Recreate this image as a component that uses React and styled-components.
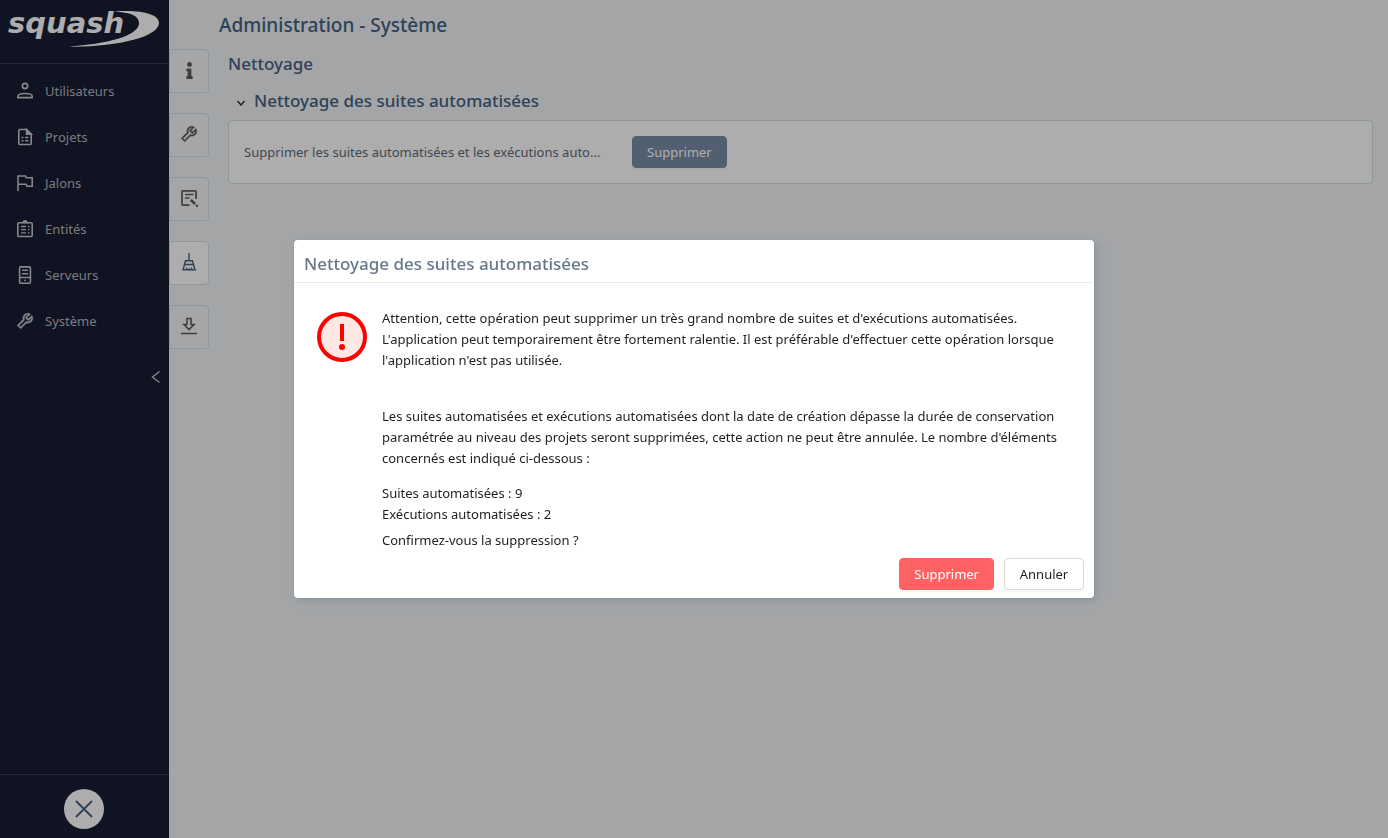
import React from "react";
import styled, { createGlobalStyle } from "styled-components";
import { AiOutlineTool } from "react-icons/ai";
import { FaInfo } from "react-icons/fa";

const GlobalStyle = createGlobalStyle`
  * {
    box-sizing: border-box;
  }

  body {
    margin: 0;
    font-family: "Noto Sans", "Open Sans", sans-serif;
    font-size: 13px;
    line-height: 21px;
    color: #1f1f1f;
  }

  h1,
  h2,
  h3,
  p {
    margin: 0;
  }
`;

const Layout = styled.div`
  display: flex;
  min-height: 100vh;
  background: #f1f4f7;
`;

const Sidebar = styled.aside`
  display: flex;
  flex-direction: column;
  flex: 0 0 169px;
  background: #191d33;
`;

const LogoLink = styled.a`
  display: block;
  height: 64px;
  border-bottom: 1px solid #31375a;

  svg {
    display: block;
  }
`;

const Menu = styled.nav`
  display: flex;
  flex-direction: column;
  padding-top: 4px;
`;

const MenuLink = styled.a`
  display: grid;
  grid-template-columns: 20px 1fr;
  align-items: center;
  justify-items: start;
  gap: 10px;
  height: 46px;
  padding-left: 15px;
  color: #b4b6bd;
  text-decoration: none;

  svg {
    justify-self: center;
    color: #c6c8ce;
  }
`;

const CollapseButton = styled.button`
  align-self: flex-end;
  display: flex;
  margin: 24px 4px 0 0;
  padding: 0;
  border: 0;
  background: none;
  color: #c5c6cc;
`;

const SidebarFooter = styled.div`
  display: flex;
  padding: 14px 64px 9px;
  margin-top: auto;
  border-top: 1px solid #31375a;
`;

const CloseButton = styled.button`
  display: flex;
  align-items: center;
  justify-content: center;
  width: 40px;
  height: 40px;
  padding: 0;
  border: 0;
  border-radius: 50%;
  background: #fff;
  color: #44607f;
`;

const Main = styled.main`
  flex: 1;
  min-width: 0;
`;

const PageTitle = styled.h1`
  padding: 11px 0 10px 50px;
  color: #44607f;
  font-size: 19px;
  font-weight: 500;
  line-height: 28px;
`;

const Body = styled.div`
  display: flex;
`;

const Tabs = styled.nav`
  display: flex;
  flex-direction: column;
  flex: 0 0 40px;
  gap: 20px;
`;

const TabLink = styled.a`
  display: flex;
  align-items: center;
  justify-content: center;
  height: 44px;
  padding-bottom: 2px;
  border: 1px solid #d5e1e6;
  border-radius: 0 4px 4px 0;
  background: ${({ $active }) => ($active ? "#fff" : "#f3f5f7")};
  color: ${({ $active }) => ($active ? "#44607f" : "#5c5c5c")};
`;

const Content = styled.div`
  flex: 1;
  min-width: 0;
  padding: 0 15px 0 19px;
`;

const SectionTitle = styled.h2`
  color: #44607f;
  font-size: 17px;
  font-weight: 500;
  line-height: 30px;
`;

const PanelTitle = styled.h3`
  display: flex;
  align-items: center;
  gap: 7px;
  padding: 7px 0 4px 7px;
  color: #44607f;
  font-size: 17px;
  font-weight: 500;
  line-height: 30px;
`;

const ToggleButton = styled.button`
  display: flex;
  padding: 4px 0 0;
  border: 0;
  background: none;
  color: #1f1f1f;
`;

const Panel = styled.section`
  display: flex;
  align-items: center;
  gap: 30px;
  padding: 15px;
  border: 1px solid #d0dfe5;
  border-radius: 4px;
  background: #fff;
`;

const PanelLabel = styled.span`
  flex: 0 1 358px;
  white-space: nowrap;
  color: #5f6c78;
`;

const buttonColors = {
  primary: { background: "#7a8da5", border: "#7a8da5", text: "#fff" },
  danger: { background: "#ff6262", border: "#ff6262", text: "#fff" },
  plain: { background: "#fff", border: "#d9d9d9", text: "#1f1f1f" },
};

const Button = styled.button`
  min-width: 80px;
  height: 32px;
  padding: 0 14px;
  border: 1px solid ${({ $kind }) => buttonColors[$kind].border};
  border-radius: 4px;
  background: ${({ $kind }) => buttonColors[$kind].background};
  box-shadow: 0 2px 0 rgba(0, 0, 0, 0.03);
  color: ${({ $kind }) => buttonColors[$kind].text};
  font: inherit;
`;

const Backdrop = styled.div`
  position: fixed;
  inset: 0;
  display: flex;
  align-items: center;
  justify-content: center;
  background: rgba(0, 0, 0, 0.32);
`;

const Dialog = styled.div`
  width: 800px;
  max-width: 90%;
  border-radius: 4px;
  background: #fff;
  box-shadow: 2px 2px 8px rgba(100, 125, 135, 0.5);
`;

const DialogTitle = styled.h2`
  padding: 9px 10px 3px;
  border-bottom: 1px solid #ebebeb;
  color: #66788a;
  font-size: 17px;
  font-weight: 500;
  line-height: 30px;
`;

const DialogBody = styled.div`
  display: flex;
  align-items: flex-start;
  gap: 15px;
  padding: 25px 23px 0;

  > svg {
    flex: none;
    margin-top: 4px;
  }
`;

const DialogText = styled.div`
  color: #1f1f1f;
`;

const Paragraph = styled.p`
  margin-bottom: ${({ $gap }) => $gap}px;
`;

const DialogActions = styled.div`
  display: flex;
  justify-content: flex-end;
  gap: 10px;
  padding: 7px 10px 8px;
`;

const Icon = ({ children, size = 18, width = 1.4 }) => (
  <svg
    width={size}
    height={size}
    viewBox={`0 0 ${size} ${size}`}
    fill="none"
    stroke="currentColor"
    strokeWidth={width}
    aria-hidden="true"
  >
    {children}
  </svg>
);

const Logo = () => (
  <svg width="168" height="58" viewBox="0 0 168 58" fill="#fff">
    <text
      x="8"
      y="33"
      fontFamily="DejaVu Sans"
      fontSize="29"
      fontWeight="bold"
      fontStyle="italic"
    >
      squash
    </text>
    <path d="M114 11.500C141 9.500 159 14 159 23C159 37 116 47.500 68 46.600C107 44 139 36 139 23C139 15.500 130 12.500 114 11.500Z" />
  </svg>
);

const UserIcon = () => (
  <Icon width={1.7}>
    <circle cx="9" cy="4" r="2.600" />
    <path d="M1.900 15.700V14.300C1.900 12.400 5 11.500 9 11.500s7.100 .9 7.100 2.800v1.400z" />
  </Icon>
);

const ProjectIcon = () => (
  <Icon width={1.6}>
    <path d="M3 1.500h7.500l4.700 4.700v9.300q0 1-1 1H3.800q-1 0-1-1V2.500q0-1 1-1z" />
    <path d="M10.500 1.500v4.700h4.700z" fill="currentColor" />
    <path d="M5.500 9.500h2M9 9.500h3.500M5.500 12.800h2M9 12.800h3.500" />
  </Icon>
);

const FlagIcon = () => (
  <Icon width={1.6}>
    <path d="M2 17V2h7.500l.8 1.800h5.900v8.400h-5.300l-.9-1.900H2" />
  </Icon>
);

const EntityIcon = () => (
  <Icon width={1.6}>
    <rect x="1.800" y="2.800" width="14.400" height="13.700" rx="1" />
    <path d="M6 2.500h1.400a1.600 1.600 0 0 1 3.200 0H12" />
    <path
      d="M5 6.500h5M12 6.500h1.500M5 9.700h5M12 9.700h1.500M5 12.900h5M12 12.900h1.500"
      strokeWidth="1.300"
    />
  </Icon>
);

const ServerIcon = () => (
  <Icon width={1.6}>
    <rect x="3.600" y="0.900" width="10.800" height="16.300" rx="1" />
    <path d="M3.600 11.500h10.800M6 4.300h6M6 7.800h6" />
    <circle cx="9" cy="14.300" r="0.900" fill="currentColor" stroke="none" />
  </Icon>
);

const LogIcon = () => (
  <Icon width={1.7}>
    <path d="M9.500 16.200H3q-1 0-1-1V2.800q0-1 1-1h12q1 0 1 1V10M5 5.500h8.500M5 9h4.500" />
    <path d="M10.800 10.800l4.200 4.200" strokeWidth="2.600" />
    <path d="M16 16l1.800 1.800" strokeWidth="2" />
  </Icon>
);

const BroomIcon = () => (
  <Icon width={1.4}>
    <path d="M9 0v7.700M4.500 11.500l1-3.800h7l1 3.800zM4.500 11.500l-1.500 5.300h12l-1.500-5.300" />
    <path d="M6.500 16.500v-2M9 16.500v-1.500M11.500 16.500v-2" strokeWidth="1.200" />
  </Icon>
);

const DownloadIcon = () => (
  <Icon width={1.6}>
    <path d="M7 1.500h4v6h3L9 12.500 4 7.500h3zM1 16.500h16" />
  </Icon>
);

const WarningIcon = () => (
  <svg width="50" height="50" viewBox="0 0 50 50" aria-hidden="true">
    <circle cx="25" cy="25" r="23" fill="#ffe7e3" stroke="#f00" strokeWidth="4" />
    <path d="M25 12v17" stroke="#f00" strokeWidth="4" />
    <circle cx="25" cy="35" r="3" fill="#f00" />
  </svg>
);

const WrenchIcon = () => <AiOutlineTool size={20} strokeWidth={20} />;

const menu = [
  { label: "Utilisateurs", icon: <UserIcon /> },
  { label: "Projets", icon: <ProjectIcon /> },
  { label: "Jalons", icon: <FlagIcon /> },
  { label: "Entités", icon: <EntityIcon /> },
  { label: "Serveurs", icon: <ServerIcon /> },
  { label: "Système", icon: <WrenchIcon /> },
];

const tabs = [
  { id: "informations", icon: <FaInfo size={17} /> },
  { id: "parametres", icon: <WrenchIcon /> },
  { id: "messages", icon: <LogIcon /> },
  { id: "nettoyage", icon: <BroomIcon />, active: true },
  { id: "telechargements", icon: <DownloadIcon /> },
];

const App = () => {
  return (
    <>
      <GlobalStyle />
      <Layout>
        <Sidebar>
          <LogoLink href="#accueil">
            <Logo />
          </LogoLink>
          <Menu>
            {menu.map(({ label, icon }) => (
              <MenuLink key={label} href={`#${label}`}>
                {icon}
                {label}
              </MenuLink>
            ))}
          </Menu>
          <CollapseButton type="button" aria-label="Replier le menu">
            <Icon>
              <path d="M12.500 3.500L5.500 9l7 5.500" />
            </Icon>
          </CollapseButton>
          <SidebarFooter>
            <CloseButton type="button" aria-label="Fermer">
              <Icon size={20} width={1.8}>
                <path d="M2 2l16 16M18 2L2 18" />
              </Icon>
            </CloseButton>
          </SidebarFooter>
        </Sidebar>

        <Main>
          <PageTitle>Administration - Système</PageTitle>
          <Body>
            <Tabs>
              {tabs.map(({ id, icon, active }) => (
                <TabLink key={id} href={`#${id}`} aria-label={id} $active={active}>
                  {icon}
                </TabLink>
              ))}
            </Tabs>
            <Content>
              <SectionTitle>Nettoyage</SectionTitle>
              <PanelTitle>
                <ToggleButton type="button" aria-label="Replier">
                  <Icon size={12} width={1.2}>
                    <path d="M2.500 4L6 8 9.500 4" />
                  </Icon>
                </ToggleButton>
                Nettoyage des suites automatisées
              </PanelTitle>
              <Panel>
                <PanelLabel>
                  Supprimer les suites automatisées et les exécutions auto...
                </PanelLabel>
                <Button type="button" $kind="primary">
                  Supprimer
                </Button>
              </Panel>
            </Content>
          </Body>
        </Main>
      </Layout>

      <Backdrop>
        <Dialog role="dialog" aria-modal="true" aria-labelledby="dialog-title">
          <DialogTitle id="dialog-title">
            Nettoyage des suites automatisées
          </DialogTitle>
          <DialogBody>
            <WarningIcon />
            <DialogText>
              <Paragraph $gap={35}>
                Attention, cette opération peut supprimer un très grand nombre de
                suites et d'exécutions automatisées. L'application peut
                temporairement être fortement ralentie. Il est préférable
                d'effectuer cette opération lorsque l'application n'est pas
                utilisée.
              </Paragraph>
              <Paragraph $gap={14}>
                Les suites automatisées et exécutions automatisées dont la date
                de création dépasse la durée de conservation paramétrée au niveau
                des projets seront supprimées, cette action ne peut être annulée.
                Le nombre d'éléments concernés est indiqué ci-dessous :
              </Paragraph>
              <Paragraph $gap={0}>Suites automatisées : 9</Paragraph>
              <Paragraph $gap={5}>Exécutions automatisées : 2</Paragraph>
              <Paragraph $gap={0}>Confirmez-vous la suppression ?</Paragraph>
            </DialogText>
          </DialogBody>
          <DialogActions>
            <Button type="button" $kind="danger">
              Supprimer
            </Button>
            <Button type="button" $kind="plain">
              Annuler
            </Button>
          </DialogActions>
        </Dialog>
      </Backdrop>
    </>
  );
};

export default App;
